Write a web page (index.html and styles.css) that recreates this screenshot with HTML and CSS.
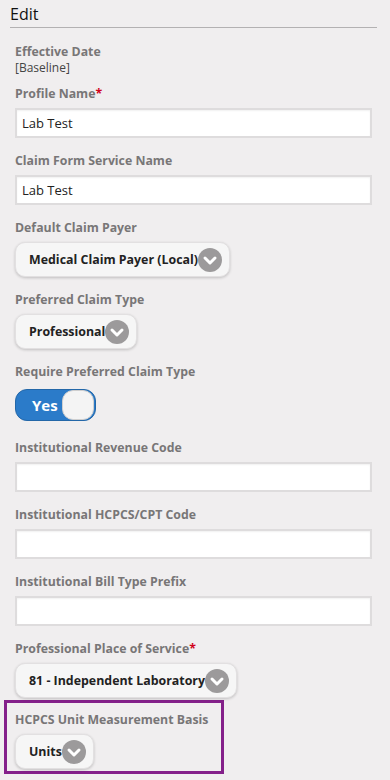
FILE: index.html
```html
<!DOCTYPE html>
<html lang="en">
<head>
  <meta charset="UTF-8" />
  <title>Edit Profile</title>
  <meta name="viewport" content="width=device-width, initial-scale=1.0" />
  <link rel="stylesheet" href="styles.css">
</head>
<body>

  <h2 class="panel-title">Edit</h2>

  <form class="edit-form">
    <div class="field">
      <div class="label">Effective Date</div>
      <div class="value">[Baseline]</div>
    </div>

    <div class="field">
      <label class="label" for="profileName">Profile Name<span class="req">*</span></label>
      <input class="text-input" type="text" id="profileName" value="Lab Test" />
    </div>

    <div class="field">
      <label class="label" for="serviceName">Claim Form Service Name</label>
      <input class="text-input" type="text" id="serviceName" value="Lab Test" />
    </div>

    <div class="field">
      <div class="label">Default Claim Payer</div>
      <div class="select">
        <span>Medical Claim Payer (Local)</span>
        <span class="chevron"><svg viewBox="0 0 24 24" width="24" height="24"><path d="M7 10 L12 15 L17 10" fill="none" stroke="#fff" stroke-width="3" stroke-linecap="round" stroke-linejoin="round"/></svg></span>
      </div>
    </div>

    <div class="field">
      <div class="label">Preferred Claim Type</div>
      <div class="select">
        <span>Professional</span>
        <span class="chevron"><svg viewBox="0 0 24 24" width="24" height="24"><path d="M7 10 L12 15 L17 10" fill="none" stroke="#fff" stroke-width="3" stroke-linecap="round" stroke-linejoin="round"/></svg></span>
      </div>
    </div>

    <div class="field toggle-field">
      <div class="label">Require Preferred Claim Type</div>
      <div class="toggle">
        <span class="toggle-text">Yes</span>
        <span class="toggle-knob"></span>
      </div>
    </div>

    <div class="field">
      <label class="label" for="revCode">Institutional Revenue Code</label>
      <input class="text-input" type="text" id="revCode" />
    </div>

    <div class="field">
      <label class="label" for="cptCode">Institutional HCPCS/CPT Code</label>
      <input class="text-input" type="text" id="cptCode" />
    </div>

    <div class="field">
      <label class="label" for="billPrefix">Institutional Bill Type Prefix</label>
      <input class="text-input" type="text" id="billPrefix" />
    </div>

    <div class="field">
      <div class="label">Professional Place of Service<span class="req">*</span></div>
      <div class="select">
        <span>81 - Independent Laboratory</span>
        <span class="chevron"><svg viewBox="0 0 24 24" width="24" height="24"><path d="M7 10 L12 15 L17 10" fill="none" stroke="#fff" stroke-width="3" stroke-linecap="round" stroke-linejoin="round"/></svg></span>
      </div>
    </div>

    <div class="field highlight">
      <div class="label">HCPCS Unit Measurement Basis</div>
      <div class="select">
        <span>Units</span>
        <span class="chevron"><svg viewBox="0 0 24 24" width="24" height="24"><path d="M7 10 L12 15 L17 10" fill="none" stroke="#fff" stroke-width="3" stroke-linecap="round" stroke-linejoin="round"/></svg></span>
      </div>
    </div>
  </form>

</body>
</html>
```

FILE: styles.css
```css
body {
  margin: 0;
  font-family: "Open Sans", Arial, sans-serif;
  background-color: #f0eeef;
  color: #222;
}

.panel-title {
  margin: 0 13px 0 10px;
  padding: 6px 0 4px 0;
  font-size: 16px;
  font-weight: normal;
  line-height: 17px;
  color: #111;
  border-bottom: 1px solid #b3b1b2;
}

.edit-form {
  padding: 16px 18px 0 15px;
}

.field {
  margin-bottom: 15px;
}

.field:first-child {
  margin-bottom: 10px;
}

.label {
  display: block;
  font-size: 12.3px;
  font-weight: bold;
  line-height: 16px;
  color: #787677;
  margin-bottom: 6px;
}

.field:first-child .label {
  margin-bottom: 0;
}

.value {
  font-size: 12px;
  line-height: 16px;
  color: #444;
}

.req {
  color: #d0021b;
}

.text-input {
  display: block;
  box-sizing: border-box;
  width: 357px;
  height: 30px;
  padding: 0 5px;
  font-family: "Open Sans", Arial, sans-serif;
  font-size: 13px;
  color: #222;
  background: #fff;
  border: 2px solid #dedcdd;
  box-shadow: inset 0 1px 2px rgba(0, 0, 0, 0.06);
  outline: none;
}

.select {
  display: inline-flex;
  align-items: center;
  box-sizing: border-box;
  height: 35px;
  padding: 0 7px 0 13px;
  font-size: 12.4px;
  font-weight: bold;
  color: #222;
  background: #f6f6f6;
  border: 1px solid #e2e0e1;
  border-radius: 10px;
  box-shadow: 0 1px 3px rgba(0, 0, 0, 0.2);
}

.chevron {
  display: flex;
  width: 24px;
  height: 24px;
  border-radius: 50%;
  background: #9c9a9b;
}

.toggle-field .label {
  margin-bottom: 9px;
}

.toggle-field {
  margin-bottom: 19px;
}

.toggle {
  display: flex;
  align-items: center;
  justify-content: space-between;
  box-sizing: border-box;
  width: 81px;
  height: 32px;
  padding: 0 1px 0 16px;
  background: #2b7bc9;
  border: 1px solid #2467a8;
  border-radius: 12px;
}

.toggle-text {
  font-size: 15px;
  font-weight: bold;
  color: #fff;
}

.toggle-knob {
  width: 30px;
  height: 28px;
  background: #f4f4f4;
  border: 1px solid #cfcfcf;
  border-radius: 11px;
}

.field.highlight {
  width: 198px;
  margin: -13px 0 0 -11px;
  padding: 9px 8px 2px 8px;
  border: 3px solid #84208a;
}
```
